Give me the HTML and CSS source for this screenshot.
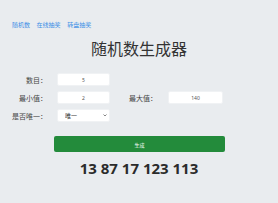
FILE: index.html
```html
<!DOCTYPE html>
<html lang="zh-CN">
<head>
    <meta charset="UTF-8">
    <meta name="viewport" content="width=device-width, initial-scale=1.0">
    <title>随机数生成器</title>
    <link rel="stylesheet" href="styles.css">
</head>
<body>
    <div class="nav">
        <a href="#">随机数</a>
        <a href="#">在线抽奖</a>
        <a href="#">转盘抽奖</a>
    </div>

    <h1>随机数生成器</h1>

    <div class="form">
        <div class="row">
            <label>数目：</label>
            <input type="text" value="5">
        </div>
        <div class="row">
            <label>最小值：</label>
            <input type="text" value="2">
            <label class="second">最大值：</label>
            <input type="text" class="wide" value="140">
        </div>
        <div class="row">
            <label>是否唯一：</label>
            <span class="select-wrap">
                <select>
                    <option>唯一</option>
                    <option>可重复</option>
                </select>
                <svg class="caret" width="4" height="3" viewBox="0 0 4 3"><path d="M0.5 0.5 L2 2 L3.5 0.5" fill="none" stroke="#666" stroke-width="0.8"/></svg>
            </span>
        </div>
    </div>

    <button class="btn">生成</button>
    <div class="result">13 87 17 123 113</div>
</body>
</html>
```

FILE: styles.css
```css
body {
    margin: 0;
    background: #e9ecef;
    font-family: "Noto Sans", "Noto Sans CJK SC", sans-serif;
    color: #333;
}
.nav {
    padding: 21px 0 0 12px;
    font-size: 6px;
    line-height: 8px;
}
.nav a {
    color: #3a8ee6;
    text-decoration: none;
    margin-right: 5px;
}
h1 {
    margin: 9px 0 0;
    text-align: center;
    font-size: 16px;
    font-weight: normal;
    line-height: 22px;
    color: #333;
}
.form {
    margin-top: 13px;
}
.row {
    display: flex;
    align-items: center;
    margin-bottom: 5px;
}
.row label {
    width: 40px;
    margin-left: 7px;
    margin-right: 10px;
    text-align: right;
    font-size: 7px;
    color: #444;
}
.row label.second {
    width: 36px;
    margin-left: 11px;
    margin-right: 11px;
}
.row input, .row select {
    box-sizing: border-box;
    width: 53px;
    height: 13px;
    padding: 0 4px;
    border: 1px solid #f0f2f4;
    border-radius: 2px;
    background: #fff;
    font-family: inherit;
    font-size: 5px;
    color: #555;
    text-align: center;
}
.row input.wide {
    width: 55px;
}
.select-wrap {
    position: relative;
    display: inline-block;
    height: 13px;
}
.row select {
    appearance: none;
    -webkit-appearance: none;
    display: block;
    text-align: left;
    padding-left: 7px;
    font-size: 6px;
    color: #333;
}
.caret {
    position: absolute;
    right: 3px;
    top: 5px;
    pointer-events: none;
}
.btn {
    display: block;
    width: 171px;
    height: 16px;
    margin: 14px auto 0 54px;
    border: none;
    border-radius: 2px;
    background: #238b3b;
    color: #fff;
    font-family: inherit;
    font-size: 5px;
}
.result {
    margin-top: 6px;
    text-align: center;
    font-family: "Open Sans", sans-serif;
    font-size: 15px;
    font-weight: bold;
    color: #2b2b2b;
}
```
